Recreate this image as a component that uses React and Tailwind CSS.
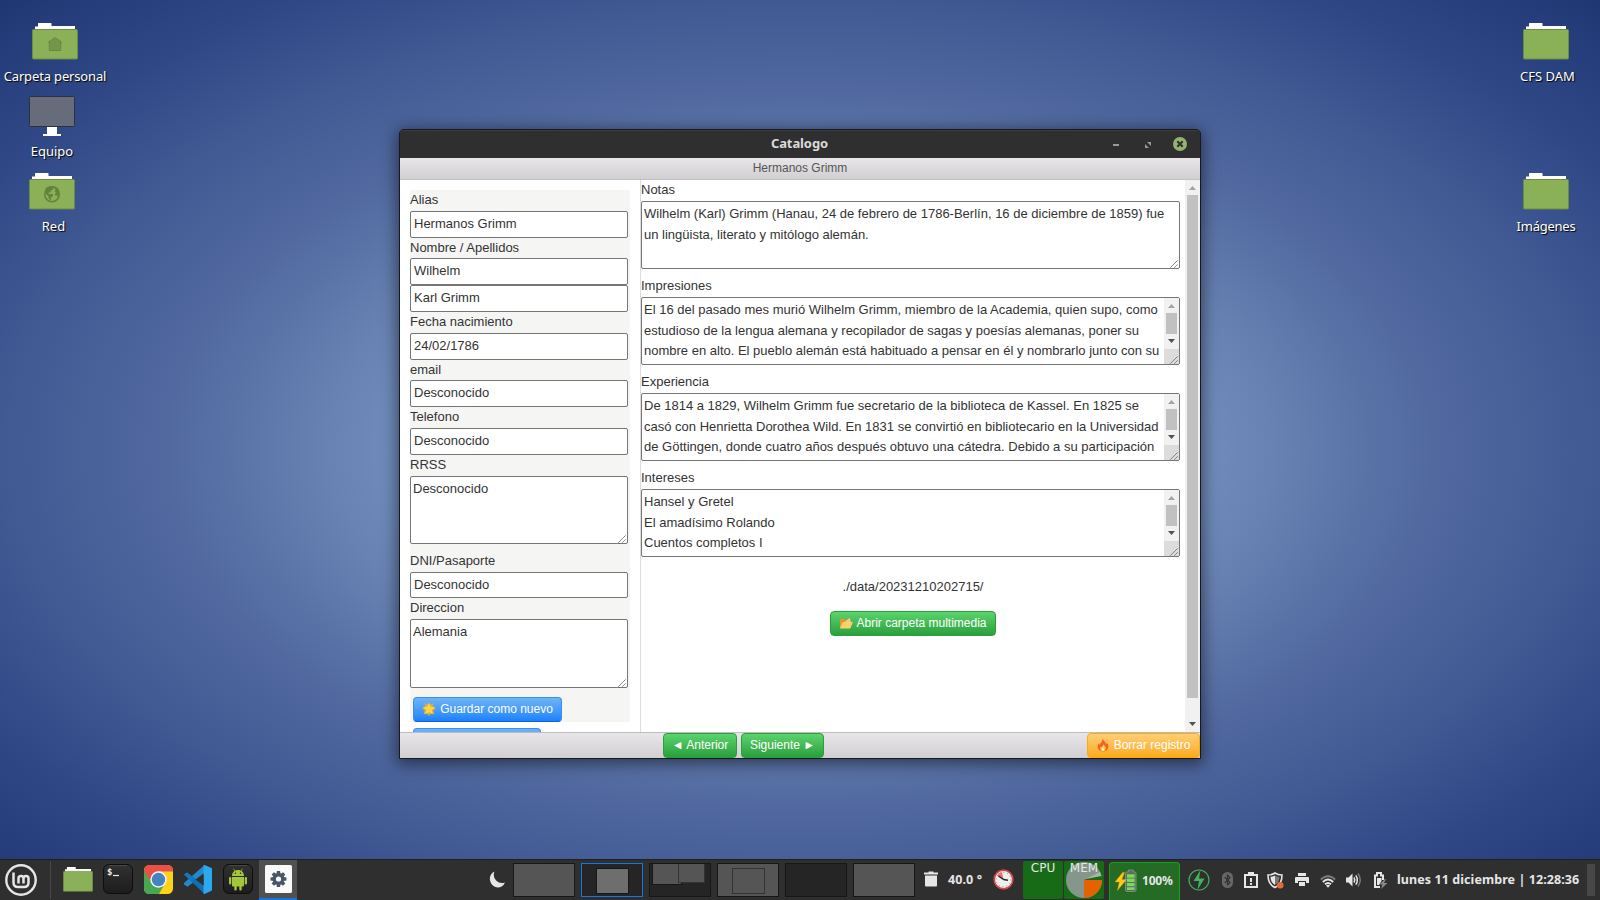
import React from 'react';

function FolderIcon({ className, children }) {
  return (
    <svg className={className} viewBox="0 0 46 37" preserveAspectRatio="none">
      <path d="M3 8V3.5h3V.5q0-.5.5-.5h12.5q.5 0 .5.5V3h23.5v5z" fill="#fff" />
      <rect x=".5" y="6.5" width="45" height="29.5" rx="1" fill="#8bb158" stroke="#6b8a43" />
      {children}
    </svg>
  );
}

function DesktopItem({ place, label, labelClass, children }) {
  return (
    <div className={'absolute flex w-[120px] flex-col items-center ' + place}>
      {children}
      <span className={'whitespace-nowrap text-[13px] leading-[18px] text-white [text-shadow:1px_1px_1px_#000] ' + labelClass}>{label}</span>
    </div>
  );
}

function Label({ className = 'h-[21px]', children }) {
  return <div className={'leading-[20.8px] ' + className}>{children}</div>;
}

function Field({ className = 'h-[27px] pb-[2px]', children }) {
  return (
    <div className={'flex w-[218px] items-center rounded-[2px] border border-[#767676] bg-white pl-[3px] leading-[20px] ' + className}>
      {children}
    </div>
  );
}

function Grip({ className = '' }) {
  return (
    <svg className={'absolute right-0 bottom-0 h-[9px] w-[9px] ' + className} viewBox="0 0 9 9">
      <path d="M.5 8.5l7-7M4.5 8.5l3-3" stroke="#555" strokeWidth="1" strokeDasharray="1.2 .3" fill="none" />
    </svg>
  );
}

function Arrow({ up }) {
  return (
    <svg className="block h-[4px] w-[7px]" viewBox="0 0 7 4">
      {up ? <path d="M0 4L3.5 0 7 4z" fill="#a3a3a3" /> : <path d="M0 0h7L3.5 4z" fill="#505050" />}
    </svg>
  );
}

function TextBox({ className, scroll, children }) {
  return (
    <div className={'relative flex rounded-[2px] border border-[#767676] bg-white ' + className}>
      <div className="min-w-0 flex-1 overflow-hidden whitespace-pre p-[2px] leading-[20.5px]">{children}</div>
      {scroll && (
        <div className="flex w-[15px] flex-none flex-col items-center bg-[#f1f1f1]">
          <div className="flex h-[15px] items-center pt-px"><Arrow up /></div>
          <div className="h-[21px] w-[11px] bg-[#c1c1c1]" />
          <div className="flex h-[15px] items-center pb-[2px]"><Arrow /></div>
          <div className="w-full flex-1 bg-[#dcdcdc]" />
        </div>
      )}
      <Grip />
    </div>
  );
}

const green = 'border-[#29a03c] bg-gradient-to-b from-[#5bd46d] to-[#29a03c]';
const blue = 'border-[#388df8] border-b-[#0866dc] bg-gradient-to-b from-[#6eb4f7] to-[#1a82fb]';
const orange = 'border-[#fcaa0e] bg-gradient-to-b from-[#fece72] to-[#fcaa0e]';

function Button({ className, children }) {
  return (
    <button className={'flex h-[25px] flex-none items-center justify-center whitespace-nowrap rounded-[4px] border pb-[2px] text-[12px] leading-[20px] text-white ' + className}>
      {children}
    </button>
  );
}

function Star() {
  return (
    <svg className="mt-[1px] mr-[4px] h-[14px] w-[14px]" viewBox="0 0 14 14">
      <path d="M7 0l1.2 2.5L11.5 1l-.8 3L14 6.5l-2.6 1.7 1 4-3.4-.6L7 14l-2-2.4-3.400.600 1-4L0 6.500l3.300-2.500L2.500 1l3.300 1.500z" fill="#dcab4a" />
      <path d="M7 1l1.700 3.800 4.300.4-3.200 2.900.9 4.100L7 10.100 3.300 12.200l.9-4.100L1 5.200l4.300-.4z" fill="#fedb3c" />
    </svg>
  );
}

function OpenFolder() {
  return (
    <svg className="mt-[1px] mr-[3px] h-[12px] w-[14px]" viewBox="0 0 14 12">
      <path d="M1 11V2.500q0-.8.8-.8h3.500l1 1.200H10q.7 0 .7.700V11z" fill="#e8962e" />
      <path d="M5 5.500L10.500.8 12 5z" fill="#f6c98a" />
      <path d="M1 11.500l2.500-6q.2-.6.8-.6h9q.7 0 .4.700l-2.200 5.300q-.2.600-.8.600z" fill="#fcd06a" />
    </svg>
  );
}

function Fire() {
  return (
    <svg className="mt-[1px] mr-[5px] h-[14px] w-[12px]" viewBox="0 0 13 14">
      <path d="M6 0c.2 2 3.500 3.500 3.700 6.200.6-.4.8-1.300.8-2C12 6 12.500 7.500 12.300 9.200 12 12 9.700 14 6.500 14S.8 12 .7 9.300C.6 7.200 1.500 6 2.300 5c0 1 .3 1.700.9 2C3.500 4.500 6.500 3 6 0z" fill="#f2602a" />
      <path d="M6.800 6c.3 1.600 2.900 2.400 2.700 4.700-.1 1.700-1.400 2.800-3 2.800s-3-1.100-3-2.800c0-1.200.5-1.900 1-2.400.1.700.4 1.100.8 1.200C5.500 8 7 7.300 6.800 6z" fill="#fdc835" />
      <path d="M6.600 9.500c.8.800 1.500 1.300 1.300 2.400-.2.900-.7 1.400-1.400 1.400s-1.400-.5-1.400-1.400c0-1 1-1.500 1.500-2.400z" fill="#fff3c0" />
    </svg>
  );
}

function Window() {
  return (
    <div className="absolute top-[129px] left-[399px] w-[802px] rounded-t-[5px] border border-[#17191f] bg-[#2f2f2f] shadow-[0_3px_16px_2px_rgba(0,0,0,0.5)]">
      <div className="flex h-[28px] items-center rounded-t-[4px] border-t border-[#3d3d3d]">
        <div className="w-[109px]" />
        <div className="flex-1 pb-px text-center font-['Noto_Sans',sans-serif] text-[13px] font-bold tracking-[-0.1px] text-[#dadada]">Catalogo</div>
        <div className="flex w-[110px] items-center">
          <div className="ml-[23px] h-[2px] w-[6px] bg-[#9a9a9a]" />
          <svg className="ml-[26px] h-[6px] w-[6px]" viewBox="0 0 6 6"><path d="M2 0h4v4zM0 2v4h4z" fill="#9a9a9a" /></svg>
          <svg className="ml-[22px] h-[14px] w-[14px] -translate-y-px" viewBox="0 0 14 14">
            <circle cx="7" cy="7" r="7" fill="#92b372" />
            <path d="M4.300 4.300l5.400 5.400M9.700 4.300l-5.400 5.400" stroke="#2f2f2f" strokeWidth="2" />
          </svg>
          <div className="w-px" />
        </div>
      </div>

      <div className="h-[600px] bg-white font-['Liberation_Sans',sans-serif] text-[13px] text-[#333]">
        <div className="h-[22px] border-b border-[#c2c0c2] bg-gradient-to-b from-[#e8e6e8] to-[#d1cfd1] text-center text-[12px] leading-[21px] text-[#555]">Hermanos Grimm</div>

        <div className="flex h-[552px] overflow-hidden">
          <div className="h-[552px] w-[241px] flex-none overflow-hidden border-r border-[#ddd] pt-[10px] pl-[10px]">
            <div className="h-[532px] w-[220px] bg-[#f5f5f4]">
              <Label>Alias</Label>
              <Field>Hermanos Grimm</Field>
              <Label className="h-[20px]">Nombre / Apellidos</Label>
              <Field>Wilhelm</Field>
              <Field>Karl Grimm</Field>
              <Label>Fecha nacimiento</Label>
              <Field>24/02/1786</Field>
              <Label className="h-[20px]">email</Label>
              <Field>Desconocido</Field>
              <Label>Telefono</Label>
              <Field>Desconocido</Field>
              <Label>RRSS</Label>
              <TextBox className="h-[68px] w-[218px]">Desconocido</TextBox>
              <Label className="mt-[7px] h-[21px]">DNI/Pasaporte</Label>
              <Field className="h-[26px]">Desconocido</Field>
              <Label>Direccion</Label>
              <TextBox className="h-[69px] w-[218px]">Alemania</TextBox>
              <Button className={'mt-[9px] ml-[3px] w-[149px] ' + blue}><Star />Guardar como nuevo</Button>
              <Button className={'mt-[6px] ml-[3px] w-[128px] ' + blue} />
            </div>
          </div>

          <div className="w-[544px] flex-none">
            <Label>Notas</Label>
            <TextBox className="h-[68px] w-[539px]">{'Wilhelm (Karl) Grimm (Hanau, 24 de febrero de 1786-Berlín, 16 de diciembre de 1859) fue\nun lingüista, literato y mitólogo alemán.'}</TextBox>
            <Label className="mt-[7px] h-[21px]">Impresiones</Label>
            <TextBox scroll className="h-[68px] w-[539px]">{'El 16 del pasado mes murió Wilhelm Grimm, miembro de la Academia, quien supo, como\nestudioso de la lengua alemana y recopilador de sagas y poesías alemanas, poner su\nnombre en alto. El pueblo alemán está habituado a pensar en él y nombrarlo junto con su'}</TextBox>
            <Label className="mt-[7px] h-[21px]">Experiencia</Label>
            <TextBox scroll className="h-[68px] w-[539px]">{'De 1814 a 1829, Wilhelm Grimm fue secretario de la biblioteca de Kassel. En 1825 se\ncasó con Henrietta Dorothea Wild. En 1831 se convirtió en bibliotecario en la Universidad\nde Göttingen, donde cuatro años después obtuvo una cátedra. Debido a su participación'}</TextBox>
            <Label className="mt-[7px] h-[21px]">Intereses</Label>
            <TextBox scroll className="h-[68px] w-[539px]">{'Hansel y Gretel\nEl amadísimo Rolando\nCuentos completos I'}</TextBox>
            <div className="mt-[20px] h-[34px] text-center leading-[20.8px]">./data/20231210202715/</div>
            <div className="flex justify-center"><Button className={'w-[166px] ' + green}><OpenFolder />Abrir carpeta multimedia</Button></div>
          </div>

          <div className="flex w-[15px] flex-none flex-col items-center bg-[#f1f1f1]">
            <div className="flex h-[15px] items-center"><Arrow up /></div>
            <div className="h-[503px] w-[11px] bg-[#c1c1c1]" />
            <div className="flex flex-1 items-end pb-[6px]"><Arrow /></div>
          </div>
        </div>

        <div className="flex h-[26px] items-end border-t border-[#bebcbe] bg-gradient-to-b from-[#e8e6e8] to-[#d1cfd1] pl-[263px]">
          <Button className={'w-[74px] ' + green}>◄ Anterior</Button>
          <Button className={'ml-[4px] w-[83px] ' + green}>Siguiente ►</Button>
          <Button className={'ml-auto w-[113px] ' + orange}><Fire />Borrar registro</Button>
        </div>
      </div>
    </div>
  );
}

function Workspace({ className = 'border-[#171717] bg-[#555]', children }) {
  return <div className={'relative mr-[6px] h-[34px] w-[62px] flex-none overflow-hidden border ' + className}>{children}</div>;
}

function Taskbar() {
  return (
    <div className="absolute bottom-0 left-0 flex h-[41px] w-[1600px] items-center border-t border-[#202022] bg-[#2f2f2f] font-['Noto_Sans',sans-serif] text-[#e6e6e6]">
      <svg className="ml-[5px] h-[32px] w-[32px] flex-none" viewBox="0 0 32 32" fill="none" stroke="#e6e6e6">
        <circle cx="16" cy="16" r="14.700" strokeWidth="2.400" />
        <path d="M8.500 8.500V18.500q0 4.500 4.500 4.500h6q4.500 0 4.500-4.500V14.500q0-2.500-2.500-2.500t-2.500 2.500v5M18.500 14.500q0-2.500-2.500-2.500t-2.500 2.500v5" strokeWidth="2.500" />
      </svg>
      <div className="ml-[13px] h-[38px] w-px flex-none bg-[#484848]" />
      <FolderIcon className="ml-[12px] h-[25px] w-[30px] flex-none -translate-y-px" />
      <svg className="ml-[10px] h-[30px] w-[30px] flex-none -translate-y-px" viewBox="0 0 30 30">
        <defs><linearGradient id="dk" x2="0" y2="1"><stop stopColor="#313131" /><stop offset="1" stopColor="#1c1c1c" /></linearGradient></defs>
        <rect x=".5" y=".5" width="29" height="29" rx="5.500" fill="url(#dk)" stroke="#0e0e0e" />
        <path d="M6 1.500h18" stroke="#484848" />
        <text x="4" y="11" fontSize="9" fontWeight="bold" fontFamily="DejaVu Sans Mono, monospace" fill="#eee">$</text>
        <path d="M10 11.500h6" stroke="#eee" strokeWidth="1.200" />
      </svg>
      <svg className="ml-[11px] h-[29px] w-[29px] flex-none -translate-y-px" viewBox="0 0 29 29">
        <defs><clipPath id="cr"><rect width="29" height="29" rx="5.500" /></clipPath></defs>
        <g clipPath="url(#cr)">
          <rect width="29" height="29" fill="#ffd21a" />
          <path d="M0 0h29v6.500H14.500L7 17 0 8z" fill="#e95048" />
          <path d="M0 6l7.500 12L20 20l-5 9H0z" fill="#48a850" />
        </g>
        <circle cx="14.500" cy="14.500" r="8.200" fill="#f4f4f4" />
        <circle cx="14.500" cy="14.500" r="6.700" fill="#4584c0" />
      </svg>
      <svg className="ml-[11px] h-[29px] w-[28px] flex-none -translate-y-px" viewBox="0 0 28 29">
        <path d="M20.500 0L22 8 3.500 21.800 0 19.500V18z" fill="#2489ca" />
        <path d="M0 9.500L3 7.500 21 21l-.5 8z" fill="#1070b3" />
        <path d="M20.500 0l6.500 2.800q1 .4 1 1.600v20q0 1.200-1 1.600L20.500 29q-1 .2-1-.8V.8q0-1 1-.8z" fill="#2aa9ee" />
        <path d="M0 9.500L3 7.500l8 6.500-3 2.500z" fill="#1478bb" />
        <path d="M19.500 8.500v12L11.500 14.500z" fill="#2f2f2f" />
      </svg>
      <svg className="ml-[11px] h-[30px] w-[30px] flex-none -translate-y-px" viewBox="0 0 30 30">
        <rect x=".5" y=".5" width="29" height="29" rx="5.500" fill="url(#dk)" stroke="#0e0e0e" />
        <path d="M6 1.500h18" stroke="#484848" />
        <g fill="#a4c639">
          <path d="M9 12c0-3.800 2.600-6 6-6s6 2.200 6 6zM9 13h12v8.500q0 1-1 1H10q-1 0-1-1z" />
          <rect x="6" y="13" width="2.300" height="7.500" rx="1.100" /><rect x="21.700" y="13" width="2.300" height="7.500" rx="1.100" />
          <rect x="11.300" y="21" width="2.400" height="5.500" rx="1.100" /><rect x="16.300" y="21" width="2.400" height="5.500" rx="1.100" />
        </g>
        <path d="M11.800 7L10.500 4.700M18.200 7l1.300-2.300" stroke="#a4c639" strokeWidth=".7" />
        <circle cx="12.400" cy="9.300" r=".7" fill="#222" /><circle cx="17.600" cy="9.300" r=".7" fill="#222" />
      </svg>
      <div className="ml-[6px] flex h-[40px] w-[38px] flex-none items-center justify-center border-b-2 border-[#1577d9] bg-[#515151]">
        <svg className="h-[28px] w-[27px]" viewBox="0 0 27 28">
          <rect width="27" height="28" rx="1.500" fill="#fafafa" />
          <g transform="translate(13.500 14)" fill="#4a5568">
            <circle r="5.900" />
            <path d="M-1.600-8h3.200L2-5h-4zM-1.600 8h3.200L2 5h-4zM-8-1.600v3.200L-5 2v-4zM8-1.600v3.200L5 2v-4z" />
            <path d="M-1.600-8h3.200L2-5h-4zM-1.600 8h3.200L2 5h-4zM-8-1.600v3.200L-5 2v-4zM8-1.600v3.200L5 2v-4z" transform="rotate(45)" />
            <circle r="2.600" fill="#fafafa" />
          </g>
        </svg>
      </div>

      <svg className="ml-[192px] h-[17px] w-[16px] flex-none -translate-y-px" viewBox="0 0 16 17">
        <path d="M5.500.5A8.500 8.500 0 0 0 8.500 16.500 8.500 8.500 0 0 0 16 11.500 8.300 8.300 0 0 1 5.500.5z" fill="#e6e6e6" />
      </svg>
      <div className="ml-[8px] flex flex-none">
        <Workspace />
        <Workspace className="border-[#1577d9] bg-[#252525]"><div className="absolute top-[4px] left-[14px] h-[26px] w-[33px] border border-[#171717] bg-[#6e6e6e]" /></Workspace>
        <Workspace className="border-[#171717] bg-[#252525]">
          <div className="absolute -top-px left-[2px] h-[22px] w-[30px] border border-[#171717] bg-[#555]" />
          <div className="absolute -top-px left-[28px] h-[20px] w-[27px] border border-[#333] bg-[#555]" />
        </Workspace>
        <Workspace><div className="absolute top-[4px] left-[14px] h-[26px] w-[33px] border border-[#333] bg-[#555]" /></Workspace>
        <Workspace className="border-[#171717] bg-[#252525]" />
        <Workspace />
      </div>
      <svg className="ml-[3px] h-[16px] w-[14px] flex-none -translate-y-px" viewBox="0 0 14 16">
        <path d="M0 1.500h4.500V.5h5v1H14V3.500H0zM1 4.500h12V14.500q0 1-1 1H2q-1 0-1-1z" fill="#e6e6e6" />
      </svg>
      <div className="ml-[10px] w-[36px] flex-none whitespace-nowrap text-[12.500px] font-bold tracking-[0.1px]">40.0 °</div>
      <svg className="ml-[9px] h-[21px] w-[21px] flex-none -translate-y-px" viewBox="0 0 21 21">
        <circle cx="10.500" cy="10.500" r="9.300" fill="#eee" stroke="#d04848" strokeWidth="1.700" />
        <circle cx="10.500" cy="10.500" r="7.300" fill="none" stroke="#888" strokeDasharray="1 2.800" />
        <path d="M10.500 10.500L4 6.500A8 8 0 0 1 9 3z" fill="#e87070" />
        <path d="M10.500 10.500L5.500 7M10.500 10.500l4.500.8" stroke="#222" strokeWidth="1.500" />
      </svg>
      <div className="ml-[9px] h-[38px] w-[40px] flex-none rounded-[2px] bg-[#176b17] text-center font-['DejaVu_Sans',sans-serif] text-[12px] leading-[15px]">CPU</div>
      <div className="relative ml-px h-[38px] w-[40px] flex-none rounded-[2px] bg-[#176b17] text-center">
        <svg className="absolute inset-0 h-[38px] w-[40px]" viewBox="0 0 40 38">
          <circle cx="20" cy="19" r="18" fill="#85978a" />
          <path d="M20 19H38A18 18 0 0 1 20 37z" fill="#e66100" />
          <path d="M20 19L37 12.500A18 18 0 0 1 38 19z" fill="#176b17" />
          <path d="M22 18L36 11l1.500 4z" fill="#a8b5aa" />
        </svg>
        <span className="relative block font-['DejaVu_Sans',sans-serif] text-[12px] leading-[15px]">MEM</span>
      </div>
      <div className="ml-[5px] flex h-[38px] w-[71px] flex-none items-center self-end rounded-t-[4px] border border-b-0 border-[#12a512] bg-[#256a25]">
        <svg className="ml-[5px] h-[24px] w-[22px] flex-none -translate-y-px" viewBox="0 0 23 24">
          <path d="M14 2.500V.5h5v2h1.500q1.500 0 1.500 1.500v17.500q0 1.500-1.500 1.500h-8Q11 23 11 21.500V4q0-1.500 1.500-1.500z" fill="#5d6b5d" stroke="#9aa79a" strokeWidth=".7" />
          <path d="M12.500 5h8v3.500h-8zM12.500 9.500h8V13h-8zM12.500 14h8v3.500h-8zM12.500 18.500h8v3h-8z" fill="#7bd862" />
          <path d="M8 3L0 13h4.500L2.500 22 12 10.500H7.200L10 3z" fill="#ffca18" stroke="#e2900d" strokeWidth=".5" />
        </svg>
        <span className="ml-[5px] whitespace-nowrap pb-[2px] text-[12px] font-bold tracking-[-0.2px]">100%</span>
      </div>
      <svg className="ml-[8px] h-[22px] w-[22px] flex-none" viewBox="0 0 22 22" fill="none" stroke="#3fb45a">
        <circle cx="11" cy="11" r="10" strokeWidth="1.200" />
        <path d="M12.500 1L5.500 12h5.500L9.500 21l7-11.500H11z" fill="#3fb45a" stroke="none" />
      </svg>
      <svg className="ml-[12px] h-[16px] w-[11px] flex-none" viewBox="0 0 11 16">
        <rect width="11" height="16" rx="5.500" fill="#686868" />
        <path d="M2.800 5L8 10.500 5.500 13V3L8 5.500 2.800 11" fill="none" stroke="#2f2f2f" strokeWidth="1.100" />
      </svg>
      <svg className="ml-[11px] h-[16px] w-[14px] flex-none" viewBox="0 0 14 16">
        <path d="M1 3h12v12H1z" fill="none" stroke="#e6e6e6" strokeWidth="2" />
        <path d="M4 2V0h6v2h1v2H3V2zM6 6h2v4H6zM6 11h2v2H6z" fill="#e6e6e6" />
      </svg>
      <svg className="ml-[9px] h-[17px] w-[17px] flex-none" viewBox="0 0 17 17">
        <path d="M8 1C6 2.500 3.500 3 1 3c0 5.500 1.500 10 7 12.500C13.500 13 15 8.500 15 3c-2.500 0-5-.5-7-2z" fill="none" stroke="#e6e6e6" strokeWidth="1.600" />
        <path d="M8 3.500C6.500 4.300 5 4.700 3.500 4.800 3.600 8.500 5 11.500 8 13z" fill="#e6e6e6" />
        <path d="M8 3.500c1.500.8 3 1.200 4.500 1.300-.1 3.700-1.500 6.700-4.500 8.200z" fill="#777" />
        <circle cx="13.200" cy="13.200" r="3.300" fill="#e46a38" />
      </svg>
      <svg className="ml-[11px] h-[14px] w-[14px] flex-none" viewBox="0 0 14 14">
        <path d="M3 0h8v3H3zM1 4h12q1 0 1 1v5h-3V8H3v2H0V5q0-1 1-1zM4 9h6v4H4z" fill="#e6e6e6" />
      </svg>
      <svg className="ml-[11px] h-[13px] w-[16px] flex-none translate-y-px" viewBox="0 0 16 13" fill="none">
        <path d="M.8 4.500Q8-2.300 15.200 4.500" stroke="#777" strokeWidth="2" />
        <path d="M2.800 7Q8 2 13.200 7M5 9.300Q8 6.500 11 9.300" stroke="#e6e6e6" strokeWidth="1.900" />
        <path d="M8 12.800L6 10.600q2-1.500 4 0z" fill="#e6e6e6" />
      </svg>
      <svg className="ml-[10px] h-[14px] w-[16px] flex-none" viewBox="0 0 16 14" fill="none">
        <path d="M0 4.500h2.500L6.500 0.500v13L2.500 9.500H0z" fill="#e6e6e6" />
        <path d="M8 4.500q1.500 2.500 0 5M9.800 2.300q3 4.700 0 9.400" stroke="#e6e6e6" strokeWidth="1.500" />
        <path d="M12 .5q4.500 6.500 0 13" stroke="#777" strokeWidth="1.500" />
      </svg>
      <svg className="ml-[11px] h-[17px] w-[15px] flex-none" viewBox="0 0 15 17">
        <path d="M7 15H2V3.500h2V1h4v2.500h2V8" fill="none" stroke="#e6e6e6" strokeWidth="2" />
        <path d="M4 6h4.500v3L6 13H4z" fill="#e6e6e6" />
        <path d="M12 7L6.500 12.500h3L8 17l6.500-6h-3.500l2-4z" fill="#8a8a8a" />
      </svg>
      <div className="ml-[9px] w-[183px] flex-none whitespace-nowrap pt-px text-[12.500px] font-bold tracking-[0.080px]">lunes 11 diciembre | 12:28:36</div>
      <div className="ml-[7px] h-[32px] w-[8px] flex-none bg-[#474747]" />
    </div>
  );
}

export default function App() {
  return (
    <div className="relative h-[900px] w-[1600px] overflow-hidden bg-[radial-gradient(ellipse_farthest-corner_at_center,#8faad0_0%,#839fca_20%,#708cbb_36%,#51699f_56%,#415a94_70%,#304886_83%,#1f3773_100%)] font-['Noto_Sans',sans-serif]">
      <DesktopItem place="top-[23px] left-[-5px]" label="Carpeta personal" labelClass="mt-[7px] tracking-[-0.15px]">
        <FolderIcon className="h-[37px] w-[46px]">
          <path d="M16.500 19L23 14.500 29.500 19H28.700v8.500H17.300V19z" fill="#74964a" stroke="#67853f" strokeWidth=".9" />
        </FolderIcon>
      </DesktopItem>
      <DesktopItem place="top-[96px] left-[-8px]" label="Equipo" labelClass="mt-[6px]">
        <svg className="h-[40px] w-[46px]" viewBox="0 0 46 40">
          <rect x=".5" y=".5" width="45" height="30" rx="1" fill="#666c79" stroke="#2e303c" />
          <path d="M18 31h10v7h4v2H14v-2h4z" fill="#fff" />
        </svg>
      </DesktopItem>
      <DesktopItem place="top-[173px] left-[-8px]" label="Red" labelClass="mt-[7px] ml-[3px]">
        <FolderIcon className="h-[37px] w-[46px]">
          <circle cx="23" cy="21.500" r="7.200" fill="#8bb158" stroke="#64823f" strokeWidth="1.600" />
          <path d="M16 20l3.500 3.500v1.500l2.500 3v-3.500l2-1.500v-2h-4.500v-1.500h2v-1.500l2.500-1.500v-1.500h2.500L27 16l-1.500 2 1.500 1.500-1 1v2h2.500v3l2-3.500q.8-9-7.500-9T16 20z" fill="#64823f" />
        </FolderIcon>
      </DesktopItem>
      <DesktopItem place="top-[23px] left-[1486px]" label="CFS DAM" labelClass="mt-[7px] ml-[3px]">
        <FolderIcon className="h-[37px] w-[46px]" />
      </DesktopItem>
      <DesktopItem place="top-[173px] left-[1486px]" label="Imágenes" labelClass="mt-[7px] tracking-[-0.25px]">
        <FolderIcon className="h-[37px] w-[46px]" />
      </DesktopItem>
      <Window />
      <Taskbar />
    </div>
  );
}
